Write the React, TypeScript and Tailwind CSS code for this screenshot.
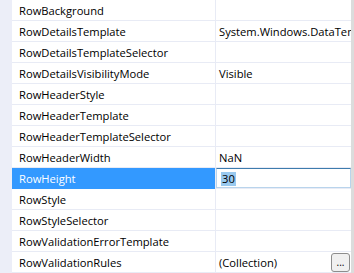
import React from "react";

const rows: { name: string; value?: string; selected?: boolean; button?: boolean }[] = [
  { name: "RowBackground" },
  { name: "RowDetailsTemplate", value: "System.Windows.DataTemplate" },
  { name: "RowDetailsTemplateSelector" },
  { name: "RowDetailsVisibilityMode", value: "Visible" },
  { name: "RowHeaderStyle" },
  { name: "RowHeaderTemplate" },
  { name: "RowHeaderTemplateSelector" },
  { name: "RowHeaderWidth", value: "NaN" },
  { name: "RowHeight", value: "30", selected: true },
  { name: "RowStyle" },
  { name: "RowStyleSelector" },
  { name: "RowValidationErrorTemplate" },
  { name: "RowValidationRules", value: "(Collection)", button: true },
];

export default function App() {
  return (
    <div
      className="w-[354px] h-[273px] overflow-hidden bg-white flex text-[11.2px] text-black"
      style={{ fontFamily: '"Open Sans", "Noto Sans", sans-serif' }}
    >
      <div className="w-[12px] bg-[#eceef8] shrink-0" />
      <div className="flex-1 min-w-0 flex flex-col">
        {rows.map((r) => (
          <div key={r.name} className="flex h-[21px] shrink-0 min-w-0">
            <div
              className={`w-[203px] shrink-0 flex items-center pl-[7px] pt-[2px] whitespace-nowrap overflow-hidden ${
                r.selected ? "bg-[#3399ff] text-white" : "border-b border-[#e8ebf5]"
              }`}
            >
              {r.name}
            </div>
            <div className="w-px bg-[#e8ebf5] shrink-0" />
            {r.selected ? (
              <div className="flex-1 min-w-0 flex flex-col border-b border-[#e8ebf5]">
                <div className="flex-1 flex items-center border border-[#b9d4ec] border-t-[#3d7bad] pl-[4px] pt-[2px]">
                  <span className="bg-[#99c9ef] leading-[14px] px-px">{r.value}</span>
                </div>
              </div>
            ) : (
              <div className="flex-1 min-w-0 flex items-center border-b border-[#e8ebf5] pl-[3px] pt-[2px] whitespace-nowrap overflow-hidden relative">
                {r.value}
                {r.button && (
                  <div className="absolute right-[1px] top-[1px] w-[19px] h-[19px] rounded-[3px] border border-[#8d8d8d] bg-[#f0f0f0] flex items-center justify-center text-[10px] leading-none pb-[2px]">
                    ...
                  </div>
                )}
              </div>
            )}
          </div>
        ))}
      </div>
      <div className="w-[3px] bg-[#dcdcdc] shrink-0" />
    </div>
  );
}
